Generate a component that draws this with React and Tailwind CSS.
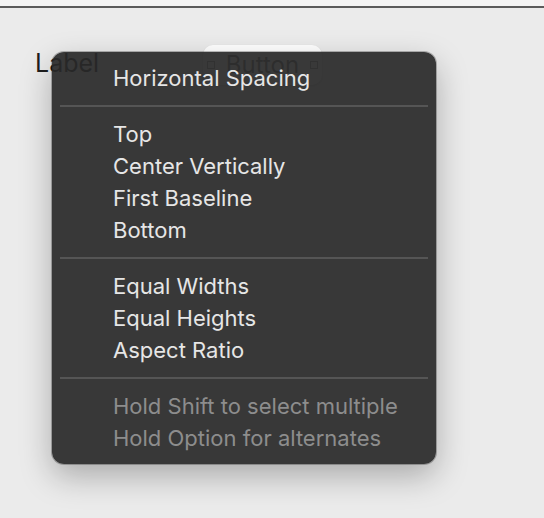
const groups = [
  [{ label: 'Horizontal Spacing' }],
  [
    { label: 'Top' },
    { label: 'Center Vertically' },
    { label: 'First Baseline' },
    { label: 'Bottom' },
  ],
  [
    { label: 'Equal Widths' },
    { label: 'Equal Heights' },
    { label: 'Aspect Ratio' },
  ],
  [
    { label: 'Hold Shift to select multiple', disabled: true },
    { label: 'Hold Option for alternates', disabled: true },
  ],
];

const Handle = () => (
  <span className="block h-[8px] w-[8px] border border-[#9a9a9a] bg-white" />
);

const MenuItem = ({ label, disabled }) => (
  <div
    className={`flex h-[32px] items-center pl-[61px] text-[22px] ${disabled ? 'text-[#8d8d8d]' : 'text-[#e6e6e6]'}`}
  >
    {label}
  </div>
);

const Separator = () => (
  <div className="flex h-[24px] items-center px-[8px]">
    <div className="h-[2px] w-full bg-[#555555]" />
  </div>
);

export default function App() {
  return (
    <div
      className="relative h-[518px] w-[544px] overflow-hidden bg-[#ebebeb]"
      style={{ fontFamily: 'Inter, "Noto Sans", sans-serif' }}
    >
      <div className="h-[6px] bg-[#f4f4f4]" />
      <div className="h-[2px] bg-[#5b5b5b]" />

      {/* canvas objects */}
      <div className="absolute left-[35px] top-[51px] text-[25px] leading-[25px] text-[#1e1e1e]">
        Label
      </div>
      <div className="absolute left-[203px] top-[45px] flex h-[40px] w-[119px] items-center justify-between rounded-[10px] bg-white px-[4px] shadow-[0_1px_2px_rgba(0,0,0,0.15)]">
        <Handle />
        <span className="text-[24px] leading-[24px] text-[#6b6b6b]">Button</span>
        <Handle />
      </div>

      {/* context menu */}
      <div className="absolute left-[52px] top-[52px] w-[384px] rounded-[12px] bg-[#282828]/[0.92] py-[10px] shadow-[0_0_0_1px_rgba(0,0,0,0.25),0_12px_32px_rgba(0,0,0,0.28)]">
        {groups.map((items, i) => (
          <div key={i}>
            {i > 0 && <Separator />}
            {items.map((item) => (
              <MenuItem key={item.label} {...item} />
            ))}
          </div>
        ))}
      </div>
    </div>
  );
}
